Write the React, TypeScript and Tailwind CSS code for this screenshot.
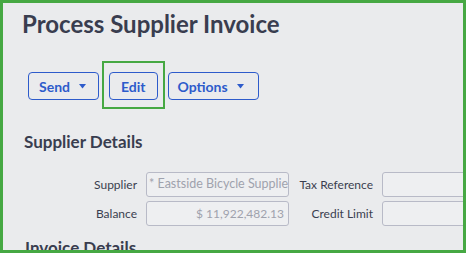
import React from "react";

function Caret() {
  return (
    <svg width="7" height="5" viewBox="0 0 7 5" className="ml-[9px]">
      <path d="M0 0 L7 0 L3.5 4.5 Z" fill="#2d5bcb" />
    </svg>
  );
}

export default function App() {
  const font = { fontFamily: "Lato, 'Open Sans', sans-serif" };
  return (
    <div
      className="w-[466px] h-[253px] border-[3px] border-[#46a843] bg-[#eaebed] overflow-hidden"
      style={font}
    >
      <div className="pl-[19px] pt-[6px]">
        <h1 className="text-[24px] leading-[29px] font-bold text-[#393d4f]">
          Process Supplier Invoice
        </h1>
        <div className="flex items-center gap-[10px] mt-[34px] pl-[6px]">
          <button className="h-[28px] flex items-center pl-[10px] pr-[12px] border border-[#2d5bcb] rounded-[4px] text-[14px] font-bold text-[#2d5bcb]">
            Send
            <Caret />
          </button>
          <div className="relative">
            <div className="absolute left-[-7px] right-[-7px] top-[-11px] bottom-[-9px] border-2 border-[#46a843] pointer-events-none" />
            <button className="h-[28px] flex items-center pl-[11px] pr-[11px] border border-[#2d5bcb] rounded-[4px] text-[14px] font-bold text-[#2d5bcb]">
              Edit
            </button>
          </div>
          <button className="h-[28px] flex items-center pl-[9px] pr-[14px] border border-[#2d5bcb] rounded-[4px] text-[14px] font-bold text-[#2d5bcb]">
            Options
            <Caret />
          </button>
        </div>
        <h2 className="mt-[32px] text-[17px] leading-[20px] font-bold text-[#393d4f] pl-[2px]">
          Supplier Details
        </h2>
        <div className="mt-[20px] grid grid-cols-[113px_143px_75px_120px] gap-x-[9px] gap-y-[4px] items-center text-[12px] text-[#3a3e4f] pl-[2px]">
          <div className="text-right">Supplier</div>
          <div className="h-[25px] border border-[#b8bac7] rounded-[3px] bg-[#eeeff1] flex items-center pl-[2px] text-[12.5px] text-[#9fa2ad] whitespace-nowrap overflow-hidden">
            * Eastside Bicycle Suppliers
          </div>
          <div className="text-right whitespace-nowrap">Tax Reference</div>
          <div className="h-[25px] border border-[#b8bac7] rounded-[3px] bg-[#eeeff1]" />
          <div className="text-right">Balance</div>
          <div className="h-[25px] border border-[#b8bac7] rounded-[3px] bg-[#eeeff1] flex items-center justify-end px-[4px] text-[#9fa2ad] whitespace-nowrap overflow-hidden">
            $ 11,922,482.13
          </div>
          <div className="text-right whitespace-nowrap">Credit Limit</div>
          <div className="h-[25px] border border-[#b8bac7] rounded-[3px] bg-[#eeeff1]" />
        </div>
        <h2 className="mt-[12px] text-[17px] leading-[20px] font-bold text-[#393d4f] pl-[3px]">
          Invoice Details
        </h2>
      </div>
    </div>
  );
}
